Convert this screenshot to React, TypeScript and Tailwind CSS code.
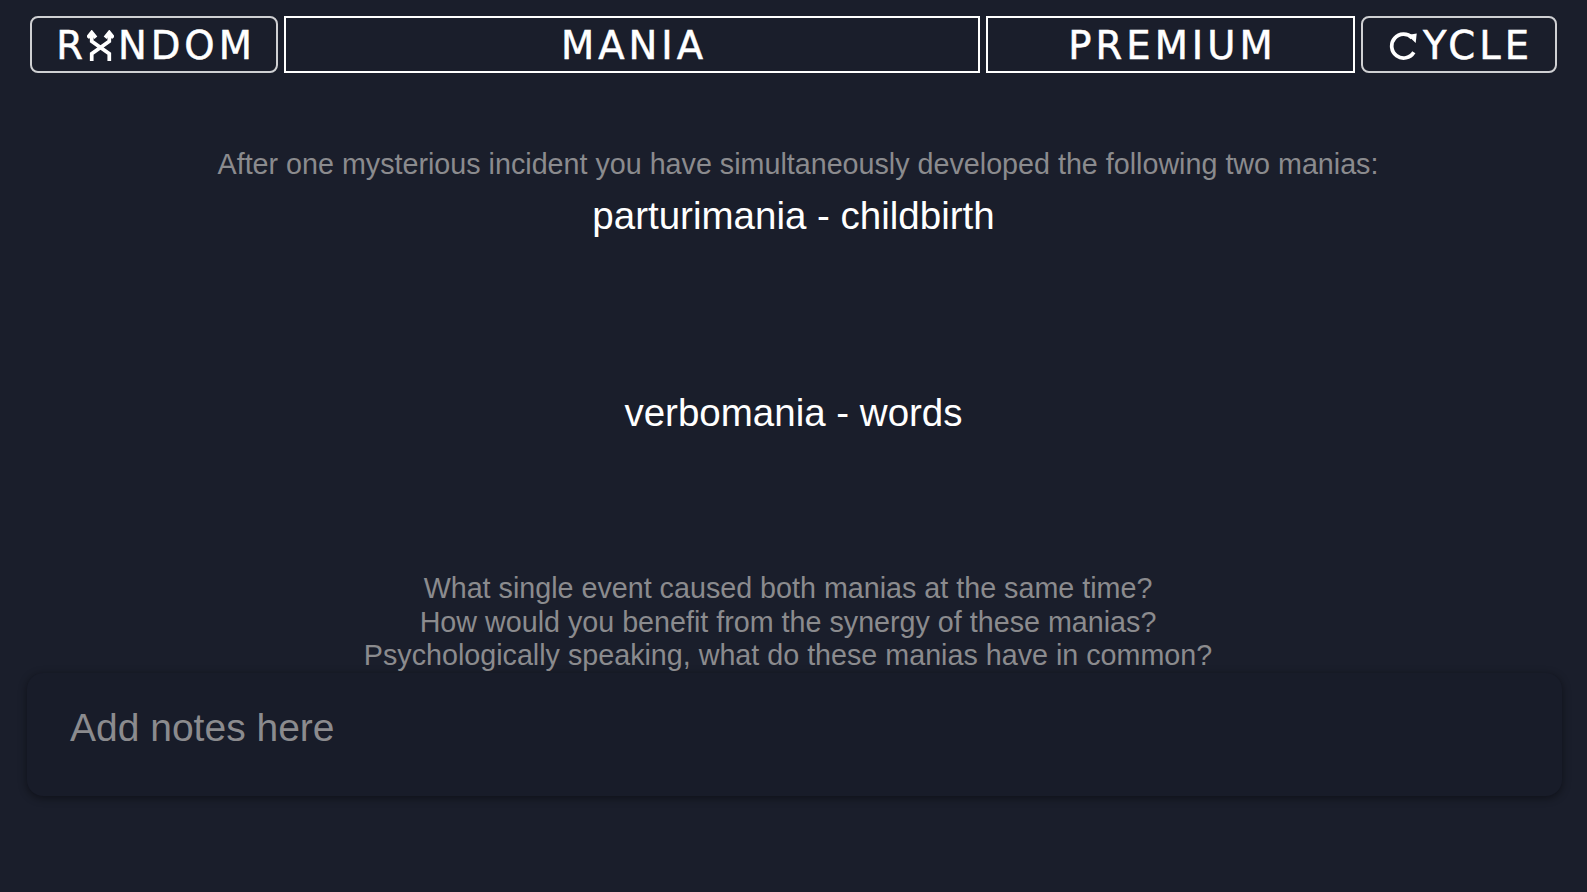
import React from "react";

function RandomGlyph() {
  return (
    <svg width="27" height="31" viewBox="0 0 26 30" fill="none" stroke="white" strokeWidth="3.6" strokeLinecap="butt" strokeLinejoin="miter" className="mr-[4px] -mt-[2px]">
      <path d="M4.5 30 V23 L21.5 11 V3" />
      <path d="M21.5 30 V23 L4.5 11 V3" />
      <path d="M0.5 7.5 L4.5 2.5 L8.5 7.5" />
      <path d="M17.5 7.5 L21.5 2.5 L25.5 7.5" />
    </svg>
  );
}

function CycleGlyph() {
  return (
    <svg width="30" height="29" viewBox="0 0 29 28" fill="none" className="mr-[4px] -mt-[2px]">
      <path d="M22.4 6.6 A11.5 11.5 0 1 0 24 20.5" stroke="white" strokeWidth="3.6" />
      <path d="M17.8 3.8 L26.8 2.4 L25.8 11.6 Z" fill="white" />
    </svg>
  );
}

export default function App() {
  const headerText =
    "text-white text-[38.5px] tracking-[4px] font-['DejaVu_Sans',Verdana,sans-serif] leading-none [-webkit-text-stroke:0.5px_white]";
  return (
    <div className="min-h-screen w-full bg-[#1a1e2b] font-['Liberation_Sans',Arial,sans-serif]">
      <div className="flex gap-[6px] px-[30px] pt-[16px]">
        <div className="w-[248px] h-[57px] border-2 border-[#cfd0d3] rounded-[8px] flex items-center justify-center">
          <div className={`flex items-center ${headerText} pl-[4px] pt-[4px]`}>
            <span>R</span>
            <RandomGlyph />
            <span>NDOM</span>
          </div>
        </div>
        <div className="flex-1 h-[57px] border-2 border-white flex items-center justify-center">
          <span className={`${headerText} pl-[4px] pt-[4px]`}>MANIA</span>
        </div>
        <div className="w-[369px] h-[57px] border-2 border-white flex items-center justify-center">
          <span className={`${headerText} pl-[4px] pt-[4px]`}>PREMIUM</span>
        </div>
        <div className="w-[196px] h-[57px] border-2 border-[#cfd0d3] rounded-[8px] flex items-center justify-center">
          <div className={`flex items-center ${headerText} pl-[4px] pt-[4px]`}>
            <CycleGlyph />
            <span>YCLE</span>
          </div>
        </div>
      </div>

      <div className="flex flex-col items-center text-center">
        <p className="mt-[74px] pl-[9px] text-[28.7px] leading-[34px] text-[#8b8b8e]">
          After one mysterious incident you have simultaneously developed the following two manias:
        </p>
        <p className="mt-[12px] text-[38.5px] leading-[46px] text-white">parturimania - childbirth</p>
        <p className="mt-[151px] text-[38.5px] leading-[46px] text-white">verbomania - words</p>
        <div className="mt-[136px] pr-[11px] text-[28.7px] leading-[33.5px] text-[#8b8b8e]">
          <p>What single event caused both manias at the same time?</p>
          <p>How would you benefit from the synergy of these manias?</p>
          <p>Psychologically speaking, what do these manias have in common?</p>
        </div>
      </div>

      <div className="ml-[27px] mr-[25px] mt-[0px] h-[123px] rounded-[16px] bg-[#181c29] shadow-[0_2px_8px_rgba(0,0,0,0.45)]">
        <textarea
          placeholder="Add notes here"
          className="w-full h-full resize-none bg-transparent outline-none pl-[43px] pt-[32px] pr-[43px] text-[39px] leading-[45px] text-white placeholder:text-[#8b8b8e] font-['Liberation_Sans',Arial,sans-serif]"
        />
      </div>
    </div>
  );
}
